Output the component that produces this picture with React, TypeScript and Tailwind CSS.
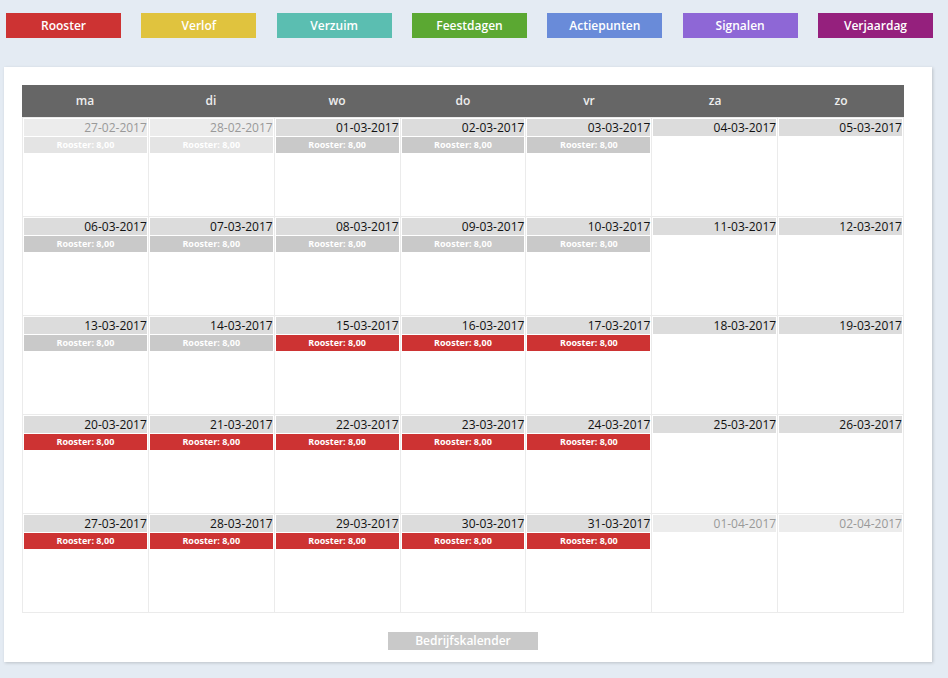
const legend = [
  { label: "Rooster", cls: "bg-[#cd3333]" },
  { label: "Verlof", cls: "bg-[#e0c33e]" },
  { label: "Verzuim", cls: "bg-[#5bbeb1]" },
  { label: "Feestdagen", cls: "bg-[#5ba832]" },
  { label: "Actiepunten", cls: "bg-[#698bd9]" },
  { label: "Signalen", cls: "bg-[#8e67d6]" },
  { label: "Verjaardag", cls: "bg-[#95207d]" },
];

const days = ["ma", "di", "wo", "do", "vr", "za", "zo"];

type Day = { date: string; other: boolean; rooster: "none" | "gray" | "red" | "faded" };

function pad(n: number) {
  return n < 10 ? "0" + n : "" + n;
}

function buildDays(): Day[] {
  const out: Day[] = [];
  out.push({ date: "27-02-2017", other: true, rooster: "faded" });
  out.push({ date: "28-02-2017", other: true, rooster: "faded" });
  for (let d = 1; d <= 31; d++) {
    const idx = out.length % 7;
    const weekend = idx >= 5;
    let rooster: Day["rooster"] = "none";
    if (!weekend) rooster = d < 15 ? "gray" : "red";
    out.push({ date: `${pad(d)}-03-2017`, other: false, rooster });
  }
  out.push({ date: "01-04-2017", other: true, rooster: "none" });
  out.push({ date: "02-04-2017", other: true, rooster: "none" });
  return out;
}

const rows: Day[][] = [];
const all = buildDays();
for (let i = 0; i < all.length; i += 7) rows.push(all.slice(i, i + 7));

const roosterCls = {
  gray: "bg-[#c9c9c9]",
  red: "bg-[#cd3333]",
  faded: "bg-[#e4e4e4]",
};

export default function App() {
  return (
    <div className="min-h-[678px] bg-[#e4ebf3] font-['Open_Sans',sans-serif]">
      {/* Legend */}
      <div className="flex justify-between pl-[6px] pr-[15px] pt-[13px]">
        {legend.map((l) => (
          <div
            key={l.label}
            className={`w-[115px] h-[25px] flex items-center justify-center text-[12px] font-semibold text-white ${l.cls}`}
          >
            {l.label}
          </div>
        ))}
      </div>

      {/* Calendar panel */}
      <div className="ml-[4px] mt-[29px] w-[928px] bg-white shadow-[1px_1px_3px_rgba(0,0,0,0.18)] pl-[18px] pt-[18px] pb-[12px]">
        <div className="w-[882px]">
          <div className="grid grid-cols-7 h-[32px] bg-[#666666]">
            {days.map((d) => (
              <div key={d} className="flex items-center justify-center text-[12px] font-semibold text-[#eeeeee]">
                {d}
              </div>
            ))}
          </div>
          <div className="border-l border-t border-[#ebebeb]">
            {rows.map((row, ri) => (
              <div key={ri} className="grid grid-cols-7">
                {row.map((day) => (
                  <div key={day.date} className="h-[99px] border-r border-b border-[#ebebeb] p-[1px]">
                    <div
                      className={`h-[17px] text-right text-[12px] leading-[17px] ${
                        day.other ? "bg-[#ececec] text-[#999999]" : "bg-[#dcdcdc] text-[#111111]"
                      }`}
                    >
                      {day.date}
                    </div>
                    {day.rooster !== "none" && (
                      <div
                        className={`mt-[1px] h-[16px] flex items-center justify-center text-[9px] font-bold text-white ${roosterCls[day.rooster]}`}
                      >
                        Rooster: 8,00
                      </div>
                    )}
                  </div>
                ))}
              </div>
            ))}
          </div>
          <div className="flex justify-center mt-[19px]">
            <div className="w-[150px] h-[18px] bg-[#c9c9c9] flex items-center justify-center text-[12px] font-semibold text-white">
              Bedrijfskalender
            </div>
          </div>
        </div>
      </div>
    </div>
  );
}
